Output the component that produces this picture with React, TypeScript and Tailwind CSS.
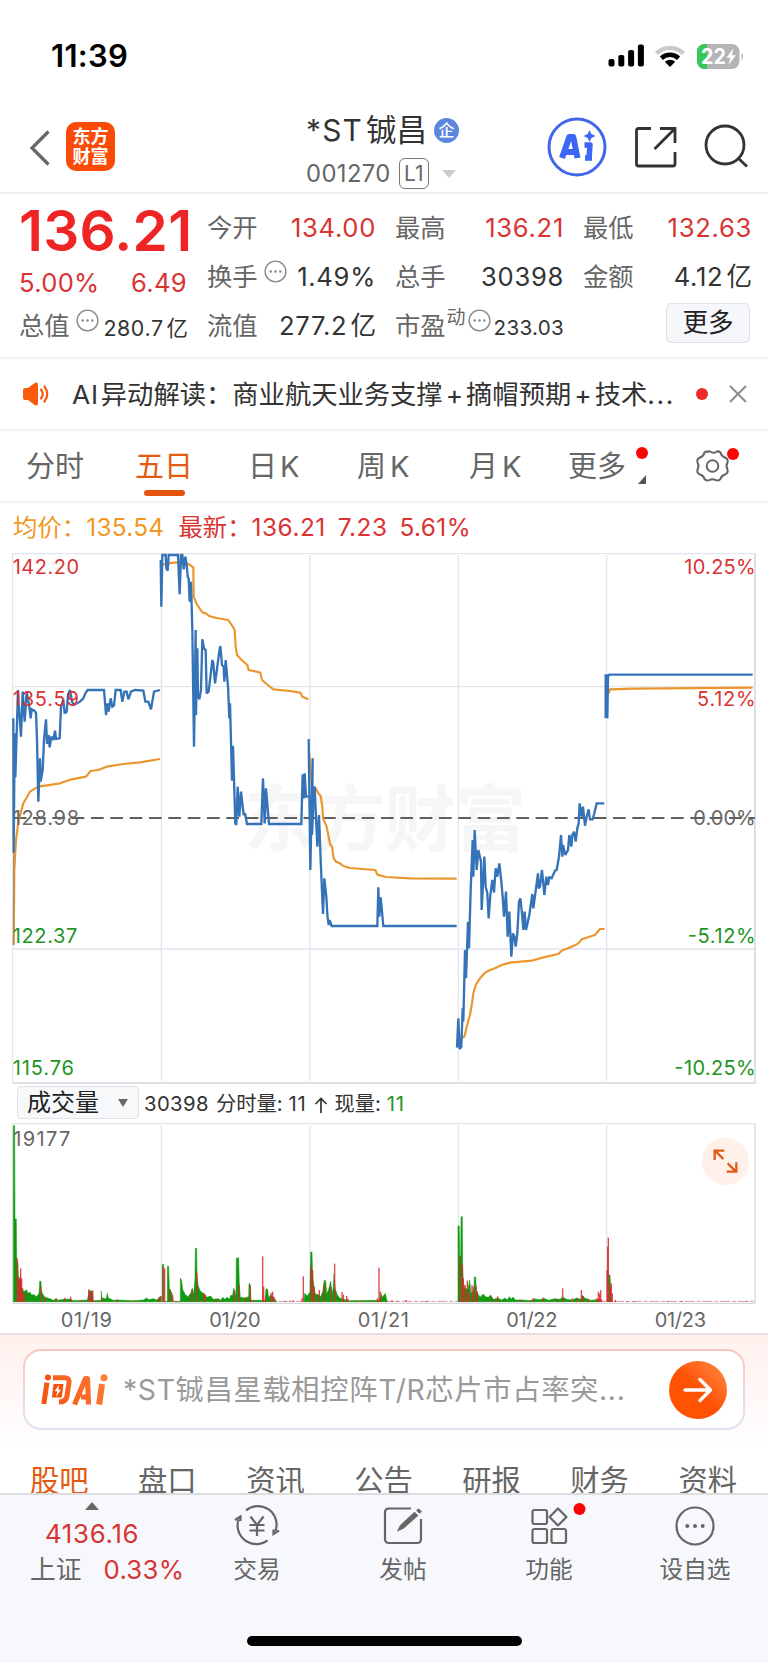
import React from "react";

const BLUE = "#3573b9";
const ORANGE = "#ea962d";
const GRID = "#e3e5ee";

// one entry per trading day, canvas units are 1/3 px
const priceLines: string[] = [
  "40,535 41,938 44,580 46,712 54,450 58,520 63,590 68,455 74,545 80,455 88,500 92,535 95,508 103,512 108,518 111,600 115,785 120,655 122,725 128,690 132,600 138,538 141,612 146,585 149,622 154,590 160,600 165,572 168,597 179,595 183,500 190,480 194,520 200,515 204,465 210,450 216,485 222,495 240,485 250,475 256,460 263,450 312,450 318,525 323,490 326,515 332,475 337,500 342,497 347,450 362,450 367,485 373,455 380,455 385,478 393,455 405,450 430,452 436,485 445,485 453,508 462,455 480,450",
  "482,60 484,200 487,45 497,45 499,85 503,92 506,45 534,45 539,163 543,45 547,45 551,88 556,50 560,75 563,110 566,115 569,185 573,125 577,270 582,620 587,270 588,525 592,325 594,465 598,478 603,450 607,298 612,325 617,330 620,460 626,455 637,360 640,370 645,430 650,395 657,340 661,318 666,375 671,380 673,425 677,360 684,440 688,535 690,490 696,722 699,617 706,850 709,855 713,740 718,830 723,755 731,825 735,820 741,852 784,852 789,715 794,850 798,745 807,852 904,852 908,703 911,775 914,700 918,770 926,770",
  "926,597 931,990 938,655 936,885 941,770 944,740 952,920 957,825 962,960 969,1122 973,1015 979,1070 982,1125 986,1155 989,1140 995,1158 1132,1158 1135,1042 1138,1130 1142,1072 1150,1158 1370,1158",
  "1371,1523 1375,1435 1379,1527 1384,1520 1388,1405 1390,1445 1395,1230 1398,1315 1404,1145 1407,1225 1412,1050 1418,900 1420,1010 1424,870 1430,990 1435,930 1443,965 1445,1110 1450,1010 1453,950 1457,1040 1462,1060 1466,1135 1471,1065 1477,1020 1482,1058 1487,985 1492,1010 1498,970 1504,1025 1508,1070 1512,1130 1518,1055 1523,1190 1528,1115 1534,1250 1539,1180 1543,1190 1547,1220 1552,1180 1557,1085 1561,1075 1566,1120 1570,1170 1574,1115 1578,1170 1588,1125 1597,1062 1600,1105 1606,1060 1614,1000 1616,1045 1620,1040 1626,990 1633,1065 1639,1010 1644,1035 1648,1012 1655,1015 1665,992 1670,990 1677,950 1683,885 1687,950 1689,915 1696,945 1704,930 1708,885 1714,920 1717,885 1722,875 1727,905 1732,865 1736,850 1739,790 1745,830 1749,800 1755,857 1760,830 1766,808 1770,838 1778,838 1783,820 1790,790 1813,790",
  "1817,535 1817,406 1822,406 1822,535 1824,410 1828,404 2258,404",
];

const avgLines: string[] = [
  "41,1215 43,990 48,900 56,840 70,790 90,755 115,740 180,730 215,718 258,710 272,693 295,690 320,680 370,672 420,667 480,657",
  "484,76 505,70 530,67 565,72 580,82 581,170 590,192 607,217 618,220 627,228 650,234 685,240 697,258 704,270 707,320 711,345 725,360 742,375 746,390 781,398 786,420 800,432 820,448 870,453 901,458 907,470 925,478",
  "928,640 936,740 947,745 955,760 962,768 967,800 969,835 980,860 990,912 996,920 1001,955 1008,965 1020,970 1030,978 1050,984 1126,990 1132,1004 1158,1011 1230,1015 1370,1016",
  "1384,1495 1393,1490 1398,1470 1404,1445 1410,1425 1416,1390 1420,1360 1427,1335 1440,1315 1455,1298 1470,1290 1485,1285 1505,1275 1530,1268 1595,1262 1630,1252 1675,1242 1685,1232 1720,1218 1735,1210 1745,1198 1785,1185 1800,1167 1814,1167",
  "1826,460 1830,448 1900,446 2258,443",
];

// volume silhouettes, base line is 545
const volumeShapes: string[] = [
  "40,545 40,17 44,17 45,297 49,297 50,412 54,430 56,490 61,470 63,505 68,505 70,515 80,510 84,520 90,516 94,524 102,524 110,530 117,520 119,484 123,484 124,512 128,522 135,532 150,536 160,541 168,536 172,541 190,538 212,537 220,542 262,540 268,512 278,514 280,542 303,541 304,513 306,534 319,536 322,520 325,534 340,541 355,540 400,542 430,540 440,534 446,539 460,536 470,540 484,528 484,545",
  "487,545 487,433 491,433 492,545 502,545 502,439 506,439 508,505 516,520 520,545 541,545 541,474 545,482 548,508 556,524 564,530 572,520 577,505 581,524 585,474 586,385 590,385 591,458 594,495 600,512 612,522 620,532 632,528 640,538 655,536 662,541 668,532 674,538 682,532 688,538 692,526 698,526 701,505 704,510 708,530 709,415 716,413 718,492 721,532 734,534 746,530 747,490 750,492 753,541 795,541 798,506 803,508 806,534 812,524 819,530 828,542 830,545",
  "912,545 914,520 922,528 930,515 932,396 936,396 938,470 942,500 946,522 956,524 962,530 968,515 973,480 977,482 980,522 986,508 992,483 996,522 1000,500 1002,460 1006,508 1012,525 1020,535 1048,542 1138,541 1143,520 1147,532 1156,520 1160,538 1162,545",
  "1374,545 1374,318 1378,318 1379,408 1382,408 1383,290 1387,290 1388,434 1390,488 1395,505 1404,508 1409,480 1413,522 1422,508 1423,471 1427,471 1429,510 1434,522 1440,532 1450,522 1456,530 1465,532 1472,525 1480,538 1494,534 1505,540 1516,534 1522,540 1528,530 1534,538 1539,531 1546,540 1570,540 1590,542 1604,537 1620,539 1632,535 1645,541 1664,536 1680,538 1688,531 1700,538 1715,540 1730,534 1742,538 1747,526 1754,534 1770,541 1790,539 1800,538 1802,545",
  "1826,545 1826,465 1830,465 1832,502 1834,545",
];

// [x, top]
const redBars: number[][] = [
  [51, 415], [56, 470], [59, 475], [62, 445], [65, 475], [68, 508], [76, 520], [123, 500], [134, 532], [170, 535], [195, 533], [212, 530],
  [246, 540], [266, 508], [270, 512], [274, 520], [278, 511], [286, 542], [307, 536], [352, 538], [406, 541], [477, 532], [481, 528],
  [489, 440], [494, 445], [510, 508], [518, 526], [528, 543], [576, 508], [590, 458], [612, 519], [616, 524], [648, 536], [660, 541],
  [703, 512], [718, 495], [737, 533], [751, 496], [756, 541], [762, 543], [788, 409], [791, 500], [797, 528], [813, 518], [818, 515],
  [822, 530], [856, 543], [870, 542], [880, 541], [906, 534], [910, 469], [932, 440], [938, 450], [943, 500], [958, 510], [972, 492],
  [993, 500], [1004, 431], [1026, 516], [1030, 524], [1040, 528], [1044, 536], [1070, 542], [1084, 542], [1110, 543], [1132, 535],
  [1137, 443], [1141, 515], [1176, 541], [1190, 542], [1218, 540], [1280, 543], [1380, 410], [1387, 432], [1390, 475], [1395, 495],
  [1402, 482], [1408, 520], [1416, 495], [1420, 500], [1428, 497], [1432, 515], [1476, 532], [1493, 529], [1560, 539], [1590, 541],
  [1600, 534], [1630, 533], [1672, 537], [1688, 505], [1716, 535], [1730, 536], [1744, 510], [1750, 528], [1766, 536], [1790, 535],
  [1795, 515], [1799, 520], [1802, 510], [1805, 538], [1821, 450], [1823, 380], [1825, 353], [1831, 500], [1834, 490], [1837, 520],
  [1846, 540], [1880, 543], [1902, 543], [2002, 543], [2044, 543], [2240, 543],
];

const MoreDots = () => (
  <svg width="23" height="23" viewBox="0 0 23 23" className="shrink-0">
    <circle cx="11.5" cy="11.5" r="10.4" fill="none" stroke="#8b8b8b" strokeWidth="1.4" />
    <circle cx="6.7" cy="11.5" r="1.3" fill="#8b8b8b" />
    <circle cx="11.5" cy="11.5" r="1.3" fill="#8b8b8b" />
    <circle cx="16.3" cy="11.5" r="1.3" fill="#8b8b8b" />
  </svg>
);

const StatusBar = () => (
  <div className="flex h-[112px] items-center justify-between pl-[51px] pr-[23px]">
    <span className="text-[31px] font-semibold tracking-[0.3px] text-black">11:39</span>
    <div className="flex items-center">
      <svg width="37" height="24" viewBox="0 0 37 24">
        <rect x="0.5" y="15" width="6" height="7.5" rx="2" />
        <rect x="10.3" y="11" width="6" height="11.5" rx="2" />
        <rect x="20.1" y="6" width="6" height="16.5" rx="2" />
        <rect x="29.9" y="0.5" width="6" height="22" rx="2" />
      </svg>
      <svg width="32" height="24" viewBox="0 0 32 24" className="ml-[9px]">
        <path d="M1 7.8 A21.5 21.5 0 0 1 31 7.8 L28 11 A17.2 17.2 0 0 0 4 11 Z" fill="#c9c9c9" />
        <path d="M5.8 12.6 A14.6 14.6 0 0 1 26.2 12.6 L23 15.9 A10.2 10.2 0 0 0 9 15.9 Z" />
        <path d="M10.8 17.7 A7.6 7.6 0 0 1 21.2 17.7 L16 23 Z" />
      </svg>
      <svg width="48" height="25" viewBox="0 0 48 25" className="ml-[11px]">
        <defs>
          <clipPath id="battery">
            <rect width="42.5" height="25" rx="7.5" />
          </clipPath>
        </defs>
        <g clipPath="url(#battery)">
          <rect width="43" height="25" fill="#b4b4b4" />
          <rect width="10" height="25" fill="#35c759" />
        </g>
        <path d="M44.5 8.5 Q47.5 12.5 44.5 16.5 Z" fill="#b4b4b4" />
        <text x="4" y="20" fontSize="21" fontWeight="700" fill="#fff" textLength="25" lengthAdjust="spacingAndGlyphs">22</text>
        <path d="M36.5 4 L29.5 13.8 H33.3 L31.5 21 L39 11.2 H34.8 Z" fill="#fff" />
      </svg>
    </div>
  </div>
);

const Header = () => (
  <div className="flex h-[82px] border-b-2 border-[#ededed]">
    <div className="flex w-[306px] items-start pl-[29px] pt-[10px]">
      <svg width="22" height="36" viewBox="0 0 22 36" className="mt-[8px]" fill="none" stroke="#666" strokeWidth="3.2">
        <path d="M19.5 1.5 L3 18 L19.5 34.5" />
      </svg>
      <div className="ml-[15px] flex h-[49px] w-[49px] flex-col items-center justify-center rounded-[10px] bg-[#fc4a08] text-[18px] font-bold leading-[20px] text-white">
        <span>东方</span>
        <span>财富</span>
      </div>
    </div>
    <div className="flex w-[241px] flex-col">
      <div className="flex h-[36px] items-center">
        <span className="text-[29.8px] tracking-[1.2px] text-[#333]">*ST</span>
        <span className="ml-[3px] text-[30.5px] text-[#333]">铖昌</span>
        <span className="ml-[7px] flex h-[25px] w-[25px] items-center justify-center rounded-full bg-[#5d87dc] text-[16px] font-medium text-white">企</span>
      </div>
      <div className="mt-[10px] flex h-[31px] items-center text-[#666]">
        <span className="text-[23.8px] tracking-[0.4px]">001270</span>
        <span className="ml-[8px] flex h-[31px] w-[30px] items-center justify-center rounded-[6px] border-[1.5px] border-[#777] text-[21px]">L1</span>
        <span className="ml-[13px] h-0 w-0 border-x-[7.5px] border-t-[8px] border-x-transparent border-t-[#cbcbcb]" />
      </div>
    </div>
    <svg width="60" height="60" viewBox="0 0 60 60" className="mt-[5px]">
      <circle cx="30" cy="30" r="28" fill="none" stroke="#4166ea" strokeWidth="3" />
      <path d="M15 41 L22.3 20 H26.3 L30.5 41 M19 35 H28" fill="none" stroke="#3c66f5" strokeWidth="6" strokeLinejoin="round" />
      <path d="M37.5 28 H43 L42 41 M38 41 H45" fill="none" stroke="#3c66f5" strokeWidth="5.5" strokeLinejoin="round" />
      <path d="M42.5 13 L44.4 17.1 L48.5 19 L44.4 20.9 L42.5 25 L40.6 20.9 L36.5 19 L40.6 17.1 Z" fill="#3c66f5" />
    </svg>
    <svg width="44" height="44" viewBox="0 0 44 44" className="ml-[26px] mt-[13px]" fill="none" stroke="#333" strokeWidth="2.8">
      <path d="M18 3.5 H5.5 Q3.5 3.5 3.5 5.5 V39 Q3.5 41 5.5 41 H40 Q42 41 42 39 V27" />
      <path d="M27 3.5 H42 V18 M41.5 4 L21.5 24" />
    </svg>
    <svg width="46" height="46" viewBox="0 0 46 46" className="ml-[27px] mt-[12px]" fill="none" stroke="#333" strokeWidth="2.8">
      <circle cx="21" cy="21" r="19" />
      <path d="M34 34 L43 42.5" />
    </svg>
  </div>
);

interface StatProps {
  label: string;
  value: string;
  unit?: string;
  red?: boolean;
  dots?: boolean;
  sup?: string;
  small?: boolean;
}

const Stat: React.FC<StatProps> = ({ label, value, unit, red, dots, sup, small }) => (
  <div className="flex h-[49px] items-center justify-between">
    <div className="flex items-center text-[25.3px] text-[#666]">
      {label}
      {sup && <span className="mb-[16px] ml-[1px] text-[19px] leading-[20px]">{sup}</span>}
      {dots && (
        <span className={sup ? "mb-[11px] ml-[2px]" : "mb-[11px] ml-[6px]"}>
          <MoreDots />
        </span>
      )}
    </div>
    <div
      className={`${small ? "mt-[6px]" : "mt-[1px] text-[25.6px] tracking-[0.7px]"} ${small && unit ? "text-[21.4px] tracking-[0.6px]" : ""} ${small && !unit ? "text-[20.6px] tracking-[0.3px]" : ""} mr-[-1px] whitespace-nowrap ${red ? "text-[#d93434]" : "text-[#333]"}`}
    >
      {value}
      {unit && <span className="ml-[3px] tracking-normal">{unit}</span>}
    </div>
  </div>
);

const Quote = () => (
  <div className="flex h-[165px] gap-[20px] border-b-2 border-[#f3f3f3] pl-[19px] pt-[9px]">
    <div className="w-[168px]">
      <div className="flex h-[56px] items-center text-[56.6px] font-semibold tracking-[0.3px] text-[#ef2525]">136.21</div>
      <div className="flex h-[42px] items-center justify-between pt-[7px] text-[25.6px] tracking-[0.3px] text-[#d93434]">
        <span>5.00%</span>
        <span>6.49</span>
      </div>
      <Stat label="总值" dots small value="280.7" unit="亿" />
    </div>
    <div className="w-[168px]">
      <Stat label="今开" red value="134.00" />
      <Stat label="换手" dots value="1.49%" />
      <Stat label="流值" value="277.2" unit="亿" />
    </div>
    <div className="w-[168px]">
      <Stat label="最高" red value="136.21" />
      <Stat label="总手" value="30398" />
      <Stat label="市盈" sup="动" dots small value="233.03" />
    </div>
    <div className="w-[168px]">
      <Stat label="最低" red value="132.63" />
      <Stat label="金额" value="4.12" unit="亿" />
      <div className="ml-auto mr-[1px] mt-[2px] flex h-[40px] w-[84px] items-center justify-center rounded-[5px] border-[1.5px] border-[#dfe1e6] bg-[#f6f7fa] pt-[1px] text-[25.6px] text-[#222]">更多</div>
    </div>
  </div>
);

const News = () => (
  <div className="flex h-[72px] items-center border-b-2 border-[#f3f3f3] pl-[23px]">
    <svg width="28" height="24" viewBox="0 0 28 24">
      <path d="M0 8 Q0 6 2 6 H5 L12 0.8 Q15 -0.5 15 2.5 V21.5 Q15 24.5 12 23.2 L5 18 H2 Q0 18 0 16 Z" fill="#fb5a0d" />
      <path d="M18 7.5 Q21.5 12 18 16.5 M21.5 4.5 Q27 12 21.5 19.5" fill="none" stroke="#fb5a0d" strokeWidth="2.2" strokeLinecap="round" />
    </svg>
    <div className="ml-[21px] flex w-[606px] items-center whitespace-nowrap pt-[2px] text-[26.3px] text-[#333]">
      <span className="mr-[2px] tracking-[0.8px]">AI</span>
      <span>异动解读：商业航天业务支撑</span>
      <span className="mx-[3px]">+</span>
      <span>摘帽预期</span>
      <span className="mx-[3px]">+</span>
      <span>技术</span>
      <span className="tracking-[1.7px]">...</span>
    </div>
    <span className="ml-[18px] h-[12px] w-[12px] rounded-full bg-[#f02828]" />
    <svg width="18" height="18" viewBox="0 0 18 18" className="ml-[21px]" stroke="#8c8c8c" strokeWidth="2">
      <path d="M1 1 L17 17 M17 1 L1 17" />
    </svg>
  </div>
);

const Tabs = () => (
  <div className="flex h-[72px] border-b-2 border-[#f3f3f3] pt-[11px] text-[29px] leading-[50px] text-[#666]">
    <div className="ml-[26px] w-[109px]">分时</div>
    <div className="w-[113px] text-[#e35b12]">
      五日
      <div className="ml-[9px] mt-[-2px] h-[6px] w-[41px] rounded-full bg-[#e4540c]" />
    </div>
    <div className="w-[109px]">
      日<span className="ml-[3px]">K</span>
    </div>
    <div className="w-[112px]">
      周<span className="ml-[4px]">K</span>
    </div>
    <div className="w-[99px]">
      月<span className="ml-[4px]">K</span>
    </div>
    <div className="flex w-[127px]">
      更多
      <div className="ml-[9px] mt-[5px] flex w-[13px] flex-col items-center">
        <span className="h-[12px] w-[12px] rounded-full bg-[#fa0505]" />
        <svg width="8" height="9" viewBox="0 0 8 9" className="mt-[16px]">
          <path d="M8 0 V9 H0 Z" fill="#555" />
        </svg>
      </div>
    </div>
    <svg width="46" height="38" viewBox="0 0 46 38" className="mt-[6px]" fill="none" stroke="#666" strokeWidth="2">
      <path d="M12.5 4 Q14 2.5 16 4 Q18.5 5.5 21 4 Q23 2.5 25.5 4.5 Q26.5 8.5 30 9.5 Q33.5 11 32.5 14.5 Q30.5 18 32.5 21.5 Q33.5 25 30 26.5 Q26.5 27.5 25.5 31 Q23 33.5 20.5 32 Q17.5 30.5 14.5 32 Q12 33.5 9.5 31 Q8.5 27.5 5 26.5 Q1.5 25 2.5 21.5 Q4.5 18 2.5 14.5 Q1.5 11 5 9.5 Q8.5 8.5 9.5 4.5 Q11 3 12.5 4 Z" strokeLinejoin="round" />
      <circle cx="17.5" cy="18" r="5.8" />
      <circle cx="38" cy="6" r="6" fill="#fa0505" stroke="none" />
    </svg>
  </div>
);

interface AxisLabel {
  y: number;
  price: string;
  percent: string;
  color: string;
  lw: number;
  rw: number;
}

const axis: AxisLabel[] = [
  { y: 101, price: "142.20", percent: "10.25%", color: "#d93434", lw: 199, rw: 214 },
  { y: 499, price: "135.59", percent: "5.12%", color: "#d93434", lw: 199, rw: 176 },
  { y: 855, price: "128.98", percent: "0.00%", color: "#666", lw: 199, rw: 187 },
  { y: 1209, price: "122.37", percent: "-5.12%", color: "#229422", lw: 194, rw: 204 },
  { y: 1606, price: "115.76", percent: "-10.25%", color: "#229422", lw: 184, rw: 244 },
];

const PriceChart = () => (
  <svg width="768" height="545" viewBox="0 0 2304 1635" className="block">
    <text x="732" y="914" fontSize="214" fontWeight="700" fill="#f6f6f7" textLength="846">东方财富</text>
    <g stroke={GRID} strokeWidth="4" fill="none">
      <path d="M38 41 H2265 V1629 H38 Z" strokeWidth="3.5" />
      <path d="M484 45 V1622 M930 45 V1622 M1375 45 V1622 M1820 45 V1622 M38 440 H2265 M38 1227 H2265" />
      <path d="M38 1629 H2265 V41" stroke="#d7d9df" />
    </g>
    <path d="M41 834 H2265" stroke="#5f5f5f" strokeWidth="6" strokeDasharray="38 20" />
    <g fill="none" strokeLinejoin="round">
      {avgLines.map((points, i) => (
        <polyline key={i} points={points} stroke={ORANGE} strokeWidth="6.5" />
      ))}
      <path d="M41 900 V1215" stroke="#98866c" strokeWidth="3" />
      {priceLines.map((points, i) => (
        <polyline key={i} points={points} stroke={BLUE} strokeWidth="7" strokeLinejoin="miter" strokeMiterlimit="2" />
      ))}
    </g>
    {axis.map((a) => (
      <g key={a.price} fontSize="60" fill={a.color}>
        <text x="38" y={a.y} textLength={a.lw}>{a.price}</text>
        <text x={2267 - a.rw} y={a.y} textLength={a.rw}>{a.percent}</text>
      </g>
    ))}
  </svg>
);

const dates = ["01/19", "01/20", "01/21", "01/22", "01/23"];

const VolumeChart = () => (
  <svg width="768" height="213" viewBox="0 0 2304 639" className="block">
    <g stroke={GRID} strokeWidth="4" fill="none">
      <path d="M38 550 V11 H2265" strokeWidth="3.5" />
      <path d="M484 17 V545 M930 17 V545 M1375 17 V545 M1820 17 V545" />
      <path d="M38 550 H2265 V11" stroke="#d7d9df" />
    </g>
    <path d="M40 544 H2262" stroke="#cf8a8a" strokeWidth="2.5" strokeDasharray="30 6 12 5" />
    {volumeShapes.map((points, i) => (
      <polygon key={i} points={points} fill="#109a10" stroke="#109a10" strokeWidth="1.5" />
    ))}
    {redBars.map(([x, top], i) => (
      <rect key={i} x={x - 2} y={top} width="4" height={546 - top} fill="#d9292b" fillOpacity="0.85" />
    ))}
    <text x="40" y="77" fontSize="60" fill="#666" textLength="171">19177</text>
    {dates.map((date, i) => (
      <text key={date} x={182 + i * 445.5} y="620" fontSize="60" fill="#666" textLength="154">
        {date}
      </text>
    ))}
    <circle cx="2176" cy="124" r="71" fill="#fff0ea" />
    <path d="M2170 117 L2145 92 M2144 120 V92 H2173 M2183 130 L2208 155 M2209 127 V155 H2180" fill="none" stroke="#e35b12" strokeWidth="7" />
  </svg>
);

const AskAi = () => (
  <div className="h-[118px] border-t-2 border-[#e4dede] bg-linear-to-b from-[#fff0ed] to-white px-[23px] pt-[14px]">
    <div className="h-[81px] rounded-[18px] bg-linear-to-b from-[#f9c5bf] to-[#dfe4f2] p-[2px]">
      <div className="flex h-full items-center rounded-[16px] bg-white pl-[15px] pr-[16px]">
        <svg width="68" height="34" viewBox="0 0 68 34">
          <defs>
            <linearGradient id="ask" x1="0" y1="34" x2="68" y2="0" gradientUnits="userSpaceOnUse">
              <stop offset="0" stopColor="#f4500e" />
              <stop offset="1" stopColor="#ff7b36" />
            </linearGradient>
          </defs>
          <g fill="none" stroke="url(#ask)" strokeWidth="5" strokeLinejoin="round">
            <path d="M7 9.5 L3.8 31 M13 4.8 H25 Q30 5 29 10 L26.8 24 Q25.5 29 19 29" />
            <path d="M34.5 31.5 L45.5 5.5 H47.5 L48.5 31.5 M41 24 H48" strokeWidth="5.2" />
            <path d="M62 11 L59.2 31.5" strokeWidth="6" />
          </g>
          <circle cx="8" cy="4.6" r="3" fill="#f4500e" />
          <circle cx="64" cy="4.8" r="3.5" fill="#ff7b36" />
          <path d="M13.5 11 H23.5 L21.8 24.5 H11.8 Z" fill="#f4500e" />
          <path d="M19 12 L14.5 18.3 H17.3 L16 23.8 L21 16.8 H18.4 Z" fill="#fff" />
        </svg>
        <div className="ml-[15px] flex-1 whitespace-nowrap pt-[2px] text-[28.3px] tracking-[0.65px] text-[#999]">*ST铖昌星载相控阵T/R芯片市占率突...</div>
        <div className="flex h-[58px] w-[58px] items-center justify-center rounded-full bg-linear-to-tr from-[#ff5202] from-50% to-[#ff8a3e]">
          <svg width="30" height="26" viewBox="0 0 30 26" fill="none" stroke="#fff" strokeWidth="3.4" strokeLinecap="round" strokeLinejoin="round">
            <path d="M2 13 H27.5 M17 2.5 L27.5 13 L17 23.5" />
          </svg>
        </div>
      </div>
    </div>
  </div>
);

const sections = ["股吧", "盘口", "资讯", "公告", "研报", "财务", "资料"];

// the row is half covered by the bottom bar
const SectionTabs = () => (
  <div className="flex h-[42px] justify-between overflow-hidden pl-[30px] pr-[31px] text-[29.3px] leading-[60px] text-[#666]">
    {sections.map((name, i) => (
      <span key={name} className={i === 0 ? "text-[#e35b12]" : ""}>
        {name}
      </span>
    ))}
  </div>
);

interface NavItemProps {
  label: string;
  children: React.ReactNode;
}

const NavItem: React.FC<NavItemProps> = ({ label, children }) => (
  <div className="flex w-[146px] flex-col items-center">
    <svg width="80" height="44" viewBox="0 0 80 44" fill="none" stroke="#666" strokeWidth="2.2" className="mt-[8px]">
      {children}
    </svg>
    <span className="mt-[5px] text-[23.7px] leading-[36px] text-[#666]">{label}</span>
  </div>
);

const BottomBar = () => (
  <div className="flex h-[170px] flex-col border-t-2 border-[#dcdde0] bg-[#f7f8fb]">
    <div className="flex h-[141px]">
      <div className="w-[184px] pl-[30px]">
        <svg width="14" height="8" viewBox="0 0 14 8" className="ml-[55px] mt-[7px]">
          <path d="M7 0 L14 8 H0 Z" fill="#666" />
        </svg>
        <div className="ml-[15px] mt-[6px] text-[25.8px] leading-[36px] tracking-[0.7px] text-[#d93434]">4136.16</div>
        <div className="flex items-center whitespace-nowrap text-[25.8px] leading-[36px] text-[#666]">
          <span>上证</span>
          <span className="ml-[22px] tracking-[0.2px] text-[#d93434]">0.33%</span>
        </div>
      </div>
      <NavItem label="交易">
        <path d="M29 7.3 A18.7 18.7 0 0 1 58.5 28 M50.5 37.3 A18.7 18.7 0 0 1 21.5 16.5 M18 17 L23.5 13.5 V18 M62 27.5 L56.5 31 V26.5" />
        <path d="M33.5 13.5 L40 22 L46.5 13.5 M40 22 V33 M32.5 22 H47.5 M32.5 27.5 H47.5" />
      </NavItem>
      <NavItem label="发帖">
        <path d="M48 5.5 H26 Q22 5.5 22 9.5 V36 Q22 40 26 40 H54 Q58 40 58 36 V16" />
        <path d="M35 27.5 L37.5 22.5 L51.5 9.5 L54.5 12.5 L40.5 25 Z M54 7.5 L55.5 6 L58 8.5 L56.5 10 Z" fill="#666" stroke="#666" strokeWidth="1.2" />
      </NavItem>
      <NavItem label="功能">
        <rect x="23.5" y="7" width="14.5" height="14" rx="2" />
        <rect x="23.5" y="26" width="14.5" height="14" rx="2" />
        <rect x="42.5" y="26" width="14.5" height="14" rx="2" />
        <path d="M49 5.5 L57.5 14 L49 22.5 L40.5 14 Z" strokeLinejoin="round" />
        <circle cx="70.5" cy="6" r="6" fill="#fa0505" stroke="none" />
      </NavItem>
      <NavItem label="设自选">
        <circle cx="40" cy="23" r="18.5" />
        <g fill="#666" stroke="none">
          <circle cx="32.3" cy="23" r="2" />
          <circle cx="40" cy="23" r="2" />
          <circle cx="47.7" cy="23" r="2" />
        </g>
      </NavItem>
    </div>
    <div className="mx-auto h-[10px] w-[275px] rounded-full bg-black" />
  </div>
);

const App: React.FC = () => {
  return (
    <div className="w-[768px] overflow-hidden bg-white font-[Inter,'Noto_Sans_CJK_SC',sans-serif]">
      <StatusBar />
      <Header />
      <Quote />
      <News />
      <Tabs />
      <div className="flex h-[37px] items-center whitespace-nowrap pl-[13px] pt-[12px] text-[24.4px] text-[#d93434]">
        <span className="text-[#f0981f]">均价：</span>
        <span className="tracking-[0.3px] text-[#f0981f]">135.54</span>
        <span className="ml-[14px]">最新：</span>
        <span className="tracking-[0.5px]">136.21</span>
        <span className="ml-[12px] tracking-[0.5px]">7.23</span>
        <span className="ml-[12px] tracking-[0.4px]">5.61%</span>
      </div>
      <PriceChart />
      <div className="flex h-[35px] items-center pl-[17px]">
        <div className="flex h-[33px] w-[122px] items-center justify-between rounded-[4px] border-[1.5px] border-[#e0e2e8] bg-[#f7f8fa] pl-[9px] pr-[10px] pt-[1px] text-[24px] text-[#222]">
          成交量
          <span className="h-0 w-0 border-x-[5px] border-t-[8px] border-x-transparent border-t-[#666]" />
        </div>
        <div className="ml-[5px] flex items-center gap-[7px] whitespace-nowrap pt-[4px] text-[20.3px] text-[#333]">
          <span className="tracking-[0.4px]">30398</span>
          <span>
            分时量: <span className="tracking-[0.8px]">11</span>
          </span>
          <svg width="14" height="16" viewBox="0 0 14 16" fill="none" stroke="#333" strokeWidth="1.7">
            <path d="M7 16 V1.5 M1.5 7 L7 1.5 L12.5 7" />
          </svg>
          <span>
            现量: <span className="tracking-[0.8px] text-[#229422]">11</span>
          </span>
        </div>
      </div>
      <VolumeChart />
      <AskAi />
      <SectionTabs />
      <BottomBar />
    </div>
  );
};

export default App;
